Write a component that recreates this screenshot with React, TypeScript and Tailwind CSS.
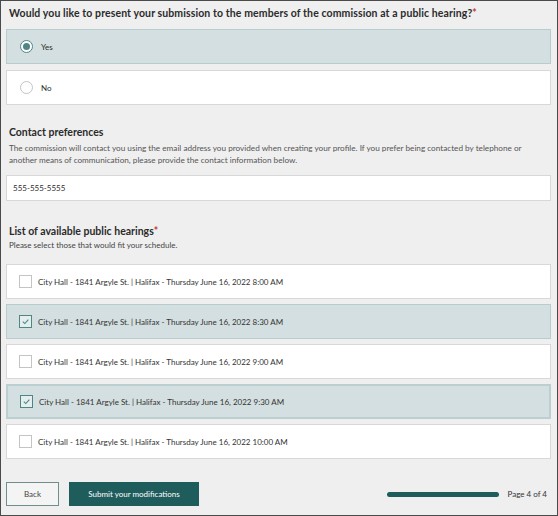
import React, { useState } from 'react';

const slots = [
  'City Hall - 1841 Argyle St. | Halifax - Thursday June 16, 2022 8:00 AM',
  'City Hall - 1841 Argyle St. | Halifax - Thursday June 16, 2022 8:30 AM',
  'City Hall - 1841 Argyle St. | Halifax - Thursday June 16, 2022 9:00 AM',
  'City Hall - 1841 Argyle St. | Halifax - Thursday June 16, 2022 9:30 AM',
  'City Hall - 1841 Argyle St. | Halifax - Thursday June 16, 2022 10:00 AM',
];

const Radio: React.FC<{ on: boolean }> = ({ on }) => (
  <span
    className={`w-[13px] h-[13px] rounded-full border flex items-center justify-center bg-white ${
      on ? 'border-[#4f8585] border-[1.5px]' : 'border-[#c4c4c4]'
    }`}
  >
    {on && <span className="w-[7px] h-[7px] rounded-full bg-[#4f8585]" />}
  </span>
);

const Check: React.FC<{ on: boolean }> = ({ on }) => (
  <span
    className={`w-[13px] h-[13px] flex items-center justify-center border ${
      on ? 'border-[#4f8585] border-[1.5px] bg-[#e5eeee]' : 'border-[#c4c4c4] bg-white'
    }`}
  >
    {on && (
      <svg viewBox="0 0 10 10" className="w-[9px] h-[9px]">
        <path d="M2 5.2 L4.2 7.3 L8.2 2.8" fill="none" stroke="#4f8585" strokeWidth="1.2" />
      </svg>
    )}
  </span>
);

const App: React.FC = () => {
  const [present, setPresent] = useState(true);
  const [picked, setPicked] = useState<boolean[]>([false, true, false, true, false]);

  return (
    <div className="w-[558px] h-[516px] bg-[#efefef] border border-[#4a4a4a] font-['Lato',sans-serif] text-[#2b2b2b] flex flex-col px-[5px]">
      <h2 className="mt-[4px] ml-[3px] text-[10.5px] font-bold leading-[16px] tracking-[0.1px] whitespace-nowrap">
        Would you like to present your submission to the members of the commission at a public hearing?
        <span className="text-[#c0392b]">*</span>
      </h2>

      <div className="mt-[8px] flex flex-col gap-[6px] pr-[1px]">
        {[true, false].map((v) => (
          <button
            key={String(v)}
            onClick={() => setPresent(v)}
            className={`h-[35px] flex items-center gap-[8px] pl-[13px] border text-left ${
              present === v ? 'bg-[#d3dfe0] border-[#b7cccd]' : 'bg-white border-[#d8d8d8]'
            }`}
          >
            <Radio on={present === v} />
            <span className="text-[8px]">{v ? 'Yes' : 'No'}</span>
          </button>
        ))}
      </div>

      <h3 className="mt-[20px] ml-[3px] text-[10.5px] font-bold leading-[15px]">Contact preferences</h3>
      <p className="ml-[3px] mt-[2px] text-[8.2px] leading-[12px] text-[#555] pr-[20px]">
        The commission will contact you using the email address you provided when creating your profile. If you prefer
        being contacted by telephone or another means of communication, please provide the contact information below.
      </p>

      <div className="mt-[9px] mr-[1px] h-[26px] bg-white border border-[#d8d8d8] flex items-center pl-[6px] text-[8px]">
        555-555-5555
      </div>

      <h3 className="mt-[23px] ml-[3px] text-[10.5px] font-bold leading-[15px]">
        List of available public hearings<span className="text-[#c0392b]">*</span>
      </h3>
      <p className="ml-[3px] mt-[1px] text-[8px] leading-[11px] text-[#444]">
        Please select those that would fit your schedule.
      </p>

      <div className="mt-[13px] flex flex-col gap-[5px] pr-[1px]">
        {slots.map((s, i) => (
          <button
            key={s}
            onClick={() => setPicked(picked.map((p, j) => (j === i ? !p : p)))}
            className={`h-[35px] flex items-center gap-[6px] pl-[12px] text-left ${
              picked[i]
                ? i === 3
                  ? 'bg-[#d3dfe0] border-2 border-[#bccfd0] pl-[11px]'
                  : 'bg-[#d3dfe0] border border-[#b7cccd]'
                : 'bg-white border border-[#d8d8d8]'
            }`}
          >
            <Check on={picked[i]} />
            <span className="text-[8px] text-[#333]">{s}</span>
          </button>
        ))}
      </div>

      <div className="mt-auto mb-[9px] flex items-center">
        <button className="w-[53px] h-[24px] border border-[#6f8f8f] bg-[#f4f4f4] text-[8px] text-[#444]">
          Back
        </button>
        <button className="ml-[10px] w-[130px] h-[24px] bg-[#1f5c5c] text-white text-[8px]">
          Submit your modifications
        </button>
        <div className="ml-auto flex items-center gap-[9px] mr-[5px]">
          <div className="w-[112px] h-[5px] rounded-full bg-[#1f5c5c]" />
          <span className="text-[8px] text-[#333]">Page 4 of 4</span>
        </div>
      </div>
    </div>
  );
};

export default App;
